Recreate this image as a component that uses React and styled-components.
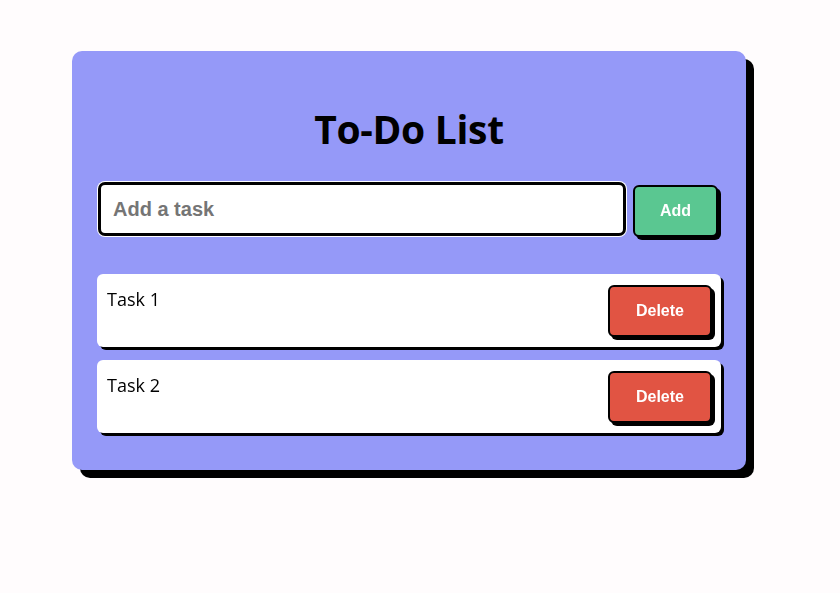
import React from "react";
import styled, { createGlobalStyle } from "styled-components";

const Global = createGlobalStyle`
  html, body { margin: 0; padding: 0; background: #fffcfd; }
  body { font-family: "Open Sans", "Noto Sans", sans-serif; }
`;

const Page = styled.div`
  padding: 51px 0 0 72px;
  min-height: 593px;
  box-sizing: border-box;
`;

const Card = styled.div`
  width: 674px;
  box-sizing: border-box;
  background: #9599f8;
  border-radius: 10px;
  box-shadow: 8px 8px 0 #000;
  padding: 51px 25px 24px;
`;

const Title = styled.h1`
  margin: 0 0 26px;
  text-align: center;
  font-size: 39px;
  letter-spacing: -0.3px;
  font-weight: 700;
  line-height: 54px;
  color: #000;
`;

const InputRow = styled.div`
  display: flex;
  align-items: flex-start;
  gap: 7px;
  padding: 0 3px 0 1px;
  margin-bottom: 37px;
`;

const TaskInput = styled.input`
  flex: 1;
  height: 54px;
  box-sizing: border-box;
  border: 3px solid #000;
  border-radius: 7px;
  box-shadow: 0 0 0 1px #fff;
  padding: 0 12px;
  font-family: "Liberation Sans", Arial, sans-serif;
  font-weight: 700;
  font-size: 20px;
  outline: none;
  &::placeholder { color: #757575; }
`;

const Button = styled.button`
  height: 52px;
  margin-top: ${(p) => p.$top || 0}px;
  box-sizing: border-box;
  padding: 0 ${(p) => p.$px}px;
  border: 2px solid #000;
  border-radius: 6px;
  box-shadow: 3px 3px 0 #000;
  background: ${(p) => p.$bg};
  color: #fff;
  font-family: "Liberation Sans", Arial, sans-serif;
  font-weight: 700;
  font-size: 16px;
  cursor: pointer;
`;

const List = styled.ul`
  list-style: none;
  margin: 0;
  padding: 0;
`;

const Item = styled.li`
  display: flex;
  justify-content: space-between;
  align-items: flex-start;
  height: 73px;
  box-sizing: border-box;
  padding: 11px 9px 10px 10px;
  margin-bottom: 13px;
  background: #fff;
  border-radius: 6px;
  box-shadow: 3px 3px 0 #000;
`;

const ItemText = styled.span`
  font-size: 18px;
  line-height: 28px;
  color: #000;
`;

export default function App() {
  const tasks = ["Task 1", "Task 2"];
  return (
    <>
      <Global />
      <Page>
        <Card>
          <Title>To-Do List</Title>
          <InputRow>
            <TaskInput placeholder="Add a task" autoFocus />
            <Button $bg="#5ac791" $px={25} $top={3}>Add</Button>
          </InputRow>
          <List>
            {tasks.map((t) => (
              <Item key={t}>
                <ItemText>{t}</ItemText>
                <Button $bg="#e15443" $px={26}>Delete</Button>
              </Item>
            ))}
          </List>
        </Card>
      </Page>
    </>
  );
}
